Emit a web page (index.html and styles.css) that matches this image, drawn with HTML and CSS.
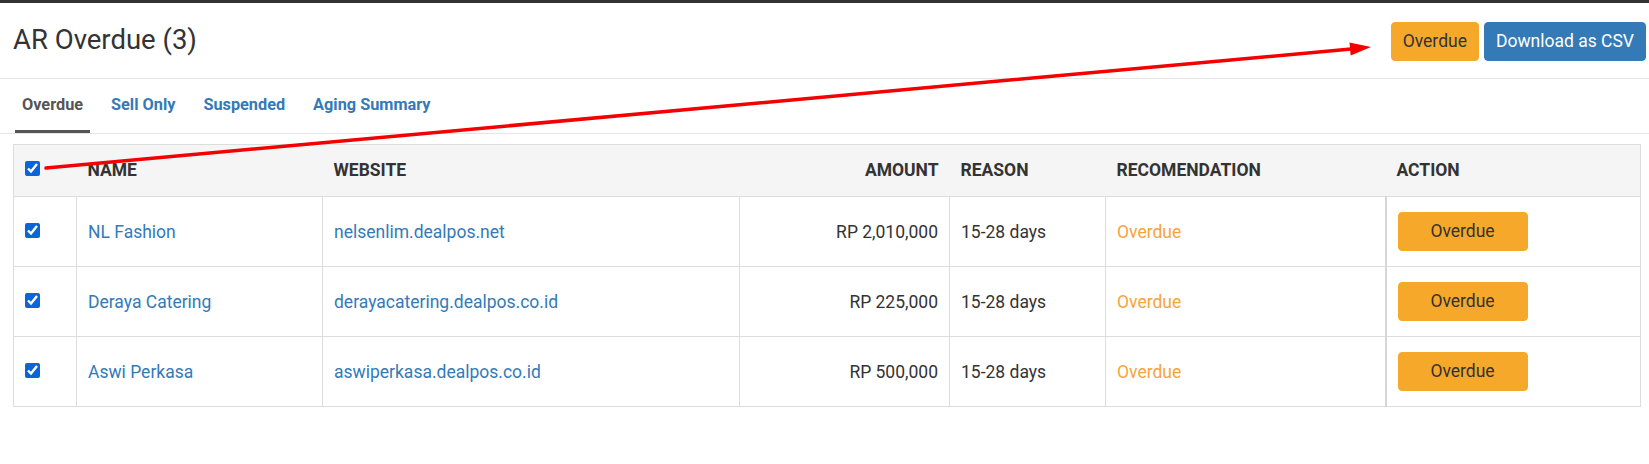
FILE: index.html
```html
<!DOCTYPE html>
<html lang="en">

<head>
    <meta charset="UTF-8">
    <meta name="viewport" content="width=device-width, initial-scale=1.0">
    <title>AR Overdue</title>
    <link rel="stylesheet" href="styles.css">
</head>

<body>
    <div class="page-header">
        <h1>AR Overdue (3)</h1>
        <div class="header-actions">
            <button class="btn btn-warning">Overdue</button>
            <button class="btn btn-primary">Download as CSV</button>
        </div>
    </div>

    <ul class="tabs">
        <li class="active"><a href="#">Overdue</a></li>
        <li><a href="#">Sell Only</a></li>
        <li><a href="#">Suspended</a></li>
        <li><a href="#">Aging Summary</a></li>
    </ul>

    <div class="content">
        <table class="data-table">
            <colgroup>
                <col style="width: 63px">
                <col style="width: 246px">
                <col style="width: 417px">
                <col style="width: 210px">
                <col style="width: 156px">
                <col style="width: 280px">
                <col>
            </colgroup>
            <thead>
                <tr>
                    <th><input type="checkbox" checked></th>
                    <th>NAME</th>
                    <th>WEBSITE</th>
                    <th class="right">AMOUNT</th>
                    <th>REASON</th>
                    <th>RECOMENDATION</th>
                    <th>ACTION</th>
                </tr>
            </thead>
            <tbody>
                <tr>
                    <td><input type="checkbox" checked></td>
                    <td><a href="#">NL Fashion</a></td>
                    <td><a href="#">nelsenlim.dealpos.net</a></td>
                    <td class="right">RP 2,010,000</td>
                    <td>15-28 days</td>
                    <td class="recommend">Overdue</td>
                    <td class="action"><button class="btn btn-warning btn-row">Overdue</button></td>
                </tr>
                <tr>
                    <td><input type="checkbox" checked></td>
                    <td><a href="#">Deraya Catering</a></td>
                    <td><a href="#">derayacatering.dealpos.co.id</a></td>
                    <td class="right">RP 225,000</td>
                    <td>15-28 days</td>
                    <td class="recommend">Overdue</td>
                    <td class="action"><button class="btn btn-warning btn-row">Overdue</button></td>
                </tr>
                <tr>
                    <td><input type="checkbox" checked></td>
                    <td><a href="#">Aswi Perkasa</a></td>
                    <td><a href="#">aswiperkasa.dealpos.co.id</a></td>
                    <td class="right">RP 500,000</td>
                    <td>15-28 days</td>
                    <td class="recommend">Overdue</td>
                    <td class="action"><button class="btn btn-warning btn-row">Overdue</button></td>
                </tr>
            </tbody>
        </table>
    </div>

    <!-- annotation arrow -->
    <svg class="annotation" width="1649" height="464" viewBox="0 0 1649 464">
        <line x1="46" y1="168" x2="1351" y2="49" stroke="#f40000" stroke-width="3.5" stroke-linecap="round" />
        <polygon points="1371,47 1349.5,42.4 1350.7,55.4" fill="#f40000" />
    </svg>
</body>

</html>
```

FILE: styles.css
```css
body {
    margin: 0;
    font-family: Roboto, "Liberation Sans", Arial, sans-serif;
    font-size: 17.5px;
    color: #333;
    background-color: #fff;
    border-top: 3px solid #333;
    position: relative;
}

a {
    color: #337ab7;
    text-decoration: none;
}

.page-header {
    display: flex;
    justify-content: space-between;
    align-items: center;
    padding: 19px 3px 17px 13px;
    border-bottom: 1px solid #e5e5e5;
}

.page-header h1 {
    margin: 0 0 3px 0;
    font-size: 27.5px;
    font-weight: 400;
    line-height: 36px;
    color: #333;
}

.header-actions {
    display: flex;
    gap: 5px;
}

.btn {
    font-family: inherit;
    font-size: 17.5px;
    height: 39px;
    line-height: 37px;
    padding: 0 11px;
    border: 1px solid transparent;
    border-radius: 4px;
    cursor: pointer;
}

.btn-warning {
    background-color: #f6a82a;
    border-color: #f6a82a;
    color: #333;
}

.btn-primary {
    background-color: #337ab7;
    border-color: #337ab7;
    color: #fff;
}

.btn-row {
    width: 130px;
    padding: 0;
    display: block;
}

.tabs {
    list-style: none;
    margin: 0;
    padding: 0 0 0 15px;
    display: flex;
    border-bottom: 1px solid #e5e5e5;
}

.tabs li {
    margin-right: 14px;
    padding: 16px 7px 15px;
    border-bottom: 3px solid transparent;
}

.tabs li a {
    display: block;
    font-size: 16.3px;
    font-weight: 700;
    line-height: 20px;
    color: #337ab7;
}

.tabs li.active {
    border-bottom-color: #555;
}

.tabs li.active a {
    color: #555;
}

.content {
    padding: 10px 8px 0 13px;
}

.data-table {
    width: 100%;
    table-layout: fixed;
    border-collapse: collapse;
    border: 1px solid #ddd;
}

.data-table th {
    background-color: #f5f5f5;
    text-align: left;
    font-weight: 700;
    padding: 15px 11px 16px;
    border-bottom: 1px solid #ddd;
}

.data-table td {
    padding: 15px 11px;
    border: 1px solid #ddd;
    vertical-align: middle;
    height: 39px;
}

.data-table .right {
    text-align: right;
}

.data-table td.action {
    border-left: 2px solid #d6d6d6;
}

.data-table input[type="checkbox"] {
    width: 15px;
    height: 15px;
    margin: 0;
    accent-color: #0b64d8;
    vertical-align: baseline;
}

.recommend {
    color: #f7a43c;
}

.annotation {
    position: absolute;
    top: -3px;
    left: 0;
    pointer-events: none;
}
```
